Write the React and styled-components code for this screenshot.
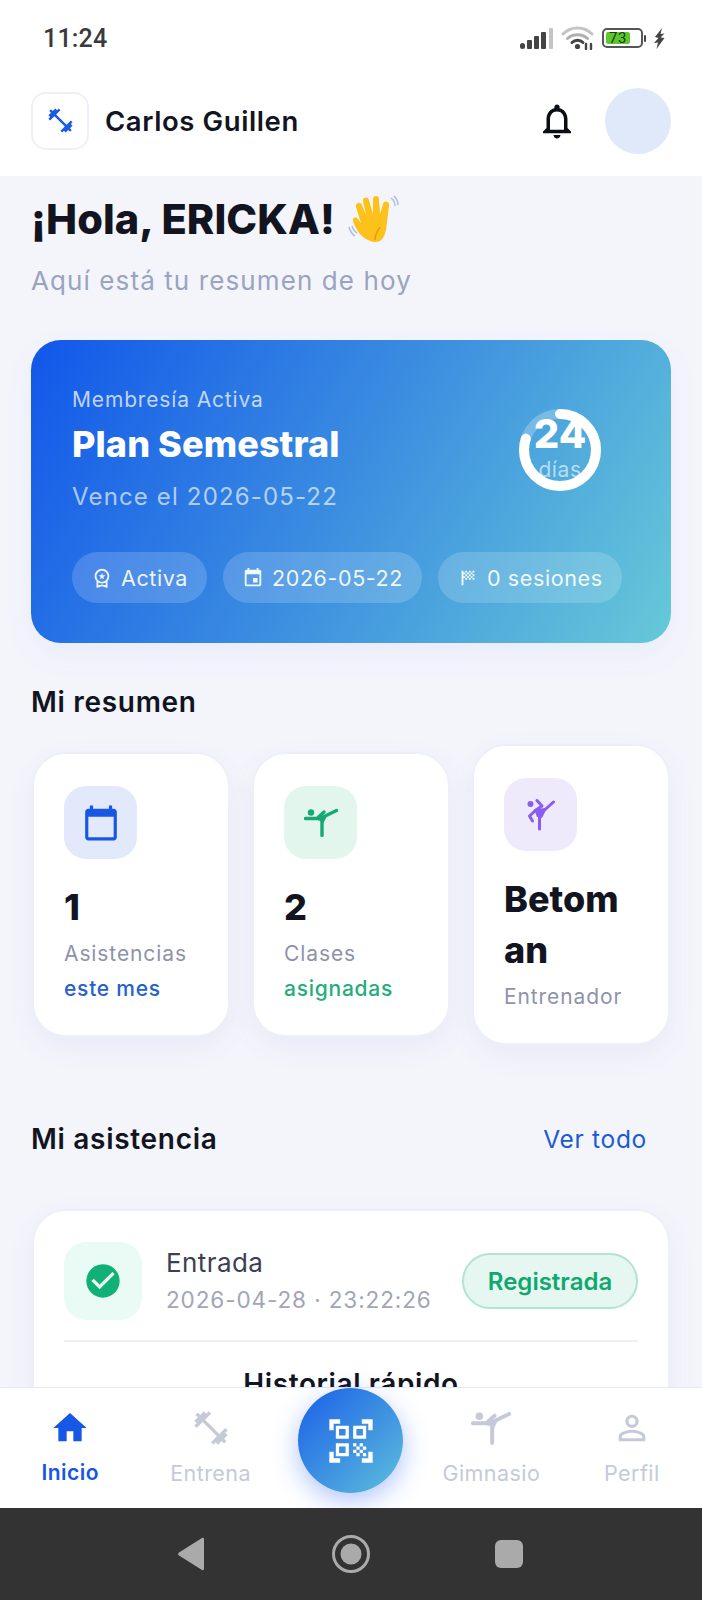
import React from 'react';
import styled, { createGlobalStyle } from 'styled-components';
import {
  MdCalendarToday,
  MdCheckCircle,
  MdEvent,
  MdFitnessCenter,
  MdHome,
  MdNotificationsNone,
  MdOutlineWorkspacePremium,
  MdPersonOutline,
  MdQrCodeScanner,
  MdSportsScore,
} from 'react-icons/md';

const bodyFont = '"Inter", "Liberation Sans", sans-serif';

const GlobalStyle = createGlobalStyle`
  html, body {
    margin: 0;
    padding: 0;
    background: #f4f5fb;
  }
  * {
    box-sizing: border-box;
  }
`;

const Screen = styled.div`
  display: flex;
  flex-direction: column;
  width: 702px;
  height: 1600px;
  overflow: hidden;
  font-family: ${bodyFont};
  background: #f4f5fb;
`;

const StatusBar = styled.div`
  display: flex;
  align-items: center;
  justify-content: space-between;
  flex: none;
  height: 76px;
  padding: 0 37px 0 43px;
  background: #fff;
`;
const Time = styled.span`
  font-family: Roboto, sans-serif;
  font-size: 25px;
  font-weight: 500;
  letter-spacing: 0.2px;
  color: #3a3a3a;
`;
const StatusIcons = styled.div`
  display: flex;
  align-items: center;
  gap: 8px;
`;
const BatteryWrap = styled.div`
  display: flex;
  align-items: center;
  gap: 1px;
`;
const BatteryNub = styled.div`
  width: 2px;
  height: 7px;
  border-radius: 1px;
  background: #444;
`;
const Battery = styled.div`
  width: 41px;
  height: 20px;
  padding: 2px;
  border: 2px solid #555;
  border-radius: 5px;
`;
const BatteryLevel = styled.div`
  height: 100%;
  border-radius: 2px;
  background: #5cc82e;
  font-family: Roboto, sans-serif;
  font-size: 15px;
  line-height: 12px;
  letter-spacing: 0.5px;
  text-align: center;
  color: #1f3a10;
`;

const Header = styled.header`
  display: flex;
  align-items: center;
  flex: none;
  height: 100px;
  padding: 12px 31px 23px 31px;
  background: #fff;
`;
const LogoBox = styled.div`
  display: grid;
  place-items: center;
  width: 58px;
  height: 58px;
  border: 2px solid #eef0f8;
  border-radius: 15px;
  color: #1a5ce0;
  font-size: 29px;
`;
const UserName = styled.div`
  flex: 1;
  margin-left: 16px;
  font-size: 27.5px;
  font-weight: 600;
  letter-spacing: 0.6px;
  color: #12141f;
`;
const Bell = styled.div`
  display: flex;
  margin-right: 27px;
  font-size: 42px;
  color: #0c0e16;
`;
const Avatar = styled.div`
  width: 66px;
  height: 66px;
  border-radius: 50%;
  background: #e0e9fa;
`;

const Main = styled.main`
  flex: 1;
  min-height: 0;
  overflow: hidden;
  padding: 18px 31px 0;
`;
const Greeting = styled.h1`
  display: flex;
  align-items: center;
  gap: 12px;
  margin: 0;
  font-size: 41.5px;
  line-height: 50px;
  font-weight: 800;
  letter-spacing: 0.1px;
  color: #12141f;
`;
const Subtitle = styled.p`
  margin: 21px 0 0;
  font-size: 26px;
  line-height: 32px;
  letter-spacing: 1.1px;
  color: #9aa3bf;
`;

const Hero = styled.section`
  margin-top: 43px;
  padding: 46px 41px 40px 41px;
  border-radius: 30px;
  background: linear-gradient(120deg, #1157ea 0%, #3c8ee0 50%, #66c9d8 100%);
  box-shadow: 0 12px 32px rgba(60, 100, 220, 0.06);
`;
const HeroTop = styled.div`
  display: flex;
  align-items: center;
  justify-content: space-between;
`;
const HeroLabel = styled.div`
  font-size: 21px;
  line-height: 28px;
  letter-spacing: 0.85px;
  color: rgba(255, 255, 255, 0.72);
`;
const HeroTitle = styled.div`
  margin-top: 8px;
  font-size: 36px;
  line-height: 44px;
  font-weight: 800;
  letter-spacing: 0.1px;
  color: #fff;
`;
const HeroDate = styled.div`
  margin-top: 15px;
  font-size: 24px;
  line-height: 32px;
  letter-spacing: 1.15px;
  color: rgba(255, 255, 255, 0.65);
`;
const Ring = styled.div`
  position: relative;
  width: 82px;
  height: 82px;
  margin-right: 29px;
`;
const RingText = styled.div`
  position: absolute;
  inset: -12px -10px -14px;
  display: flex;
  flex-direction: column;
  align-items: center;
  justify-content: center;
`;
const RingValue = styled.span`
  font-size: 40px;
  line-height: 38px;
  font-weight: 800;
  color: #fff;
`;
const RingUnit = styled.span`
  font-size: 21px;
  line-height: 34px;
  letter-spacing: 0.6px;
  color: rgba(255, 255, 255, 0.6);
`;
const Chips = styled.div`
  display: flex;
  gap: 16px;
  margin-top: 39px;
`;
const Chip = styled.div`
  display: flex;
  align-items: center;
  gap: 8px;
  height: 51px;
  padding: 0 19px;
  border-radius: 26px;
  background: rgba(255, 255, 255, 0.17);
  font-size: 21.5px;
  letter-spacing: 0.6px;
  white-space: nowrap;
  color: rgba(255, 255, 255, 0.92);
  & > svg {
    font-size: 22px;
    flex: none;
  }
`;

const SectionRow = styled.div`
  display: flex;
  align-items: center;
  justify-content: space-between;
  margin-top: ${({ $top }) => $top}px;
  padding-right: 24px;
`;
const SectionTitle = styled.h2`
  margin: 0;
  font-size: 28px;
  line-height: 36px;
  font-weight: 600;
  letter-spacing: 0.7px;
  color: #12141f;
`;
const SeeAll = styled.span`
  font-size: 24.5px;
  letter-spacing: 0.7px;
  color: #1a5cd0;
`;

const Stats = styled.div`
  display: flex;
  align-items: center;
  gap: 22px;
  margin-top: 24px;
  padding: 0 1px;
`;
const StatCard = styled.div`
  flex: 1 1 0;
  min-width: 0;
  padding: 32px 30px 30px;
  border: 2px solid #edf0f9;
  border-radius: 34px;
  background: #fff;
  box-shadow: 0 10px 28px rgba(70, 90, 180, 0.07);
`;
const IconTile = styled.div`
  display: grid;
  place-items: center;
  width: ${({ $size }) => $size}px;
  height: ${({ $size }) => $size}px;
  flex: none;
  border-radius: 22px;
  background: ${({ $bg }) => $bg};
  color: ${({ $fg }) => $fg};
`;
const StatValue = styled.div`
  margin-top: 23px;
  font-size: 36px;
  line-height: 51px;
  font-weight: 800;
  word-break: break-all;
  color: #12141f;
`;
const StatLabel = styled.div`
  margin-top: 5px;
  font-size: 21px;
  line-height: 32px;
  letter-spacing: 0.9px;
  color: #8e93ab;
`;
const StatNote = styled.div`
  margin-top: 3px;
  font-size: 21px;
  line-height: 32px;
  font-weight: 500;
  letter-spacing: 0.75px;
  color: ${({ $color }) => $color};
`;

const AttendanceCard = styled.div`
  margin: 52px 1px 0;
  padding: 31px 30px 60px;
  border: 2px solid #edf0f9;
  border-radius: 34px;
  background: #fff;
  box-shadow: 0 10px 28px rgba(70, 90, 180, 0.07);
`;
const AttendanceRow = styled.div`
  display: flex;
  align-items: center;
  padding-bottom: 20px;
  border-bottom: 2px solid #eef0f7;
`;
const AttendanceText = styled.div`
  flex: 1;
  margin-left: 24px;
`;
const AttendanceTitle = styled.div`
  font-size: 26px;
  line-height: 36px;
  letter-spacing: 0.4px;
  color: #3a3f55;
`;
const AttendanceDate = styled.div`
  margin-top: 2px;
  font-size: 22.5px;
  line-height: 34px;
  letter-spacing: 0.9px;
  color: #a1a5b8;
`;
const Badge = styled.div`
  display: grid;
  place-items: center;
  width: 176px;
  height: 56px;
  border: 2px solid #b0e5cf;
  border-radius: 28px;
  background: #e5f7f0;
  font-size: 24px;
  font-weight: 600;
  color: #10a86f;
`;
const QuickTitle = styled.div`
  margin-top: 24px;
  font-size: 28px;
  line-height: 36px;
  font-weight: 600;
  letter-spacing: 0.6px;
  text-align: center;
  color: #12141f;
`;

const BottomNav = styled.nav`
  position: relative;
  display: grid;
  grid-template-columns: repeat(5, 1fr);
  flex: none;
  height: 121px;
  border-top: 1px solid #e6e9f5;
  background: #fff;
`;
const NavItem = styled.div`
  display: flex;
  flex-direction: column;
  align-items: center;
  padding-top: 19px;
  color: ${({ $active }) => ($active ? '#1757e5' : '#c5cad9')};
  font-size: ${({ $active }) => ($active ? 21 : 21.5)}px;
  line-height: 32px;
  letter-spacing: 0.45px;
  font-weight: ${({ $active }) => ($active ? 600 : 400)};
`;
const NavIcon = styled.div`
  display: grid;
  place-items: center;
  width: 44px;
  height: 42px;
  margin-bottom: 8px;
  font-size: 40px;
`;
const Fab = styled.div`
  display: grid;
  place-items: center;
  justify-self: center;
  width: 105px;
  height: 105px;
  border-radius: 50%;
  background: linear-gradient(135deg, #1a5fe8, #5dbfdc);
  box-shadow: 0 8px 26px rgba(30, 90, 240, 0.35);
  color: #fff;
  font-size: 52px;
`;

const SystemBar = styled.div`
  position: relative;
  display: flex;
  align-items: center;
  justify-content: center;
  gap: 124px;
  flex: none;
  height: 92px;
  background: #333;
`;

const Signal = () => (
  <svg width="33" height="21" viewBox="0 0 33 21" fill="#444">
    <rect x="0" y="15" width="5" height="6" rx="2.5" />
    <rect x="7" y="12" width="5" height="9" rx="1" />
    <rect x="14" y="8" width="5" height="13" rx="1" />
    <rect x="21" y="4" width="5" height="17" rx="1" />
    <rect x="29" y="0" width="4" height="21" rx="1" fill="#c4c4c4" />
  </svg>
);

const Wifi = () => (
  <svg width="33" height="24" viewBox="0 0 33 24" fill="none" strokeLinecap="round">
    <path d="M2 8 C10 0 23 0 31 8" stroke="#c4c4c4" strokeWidth="3" />
    <path d="M6.5 12.5 C12 7.5 21 7.5 26.5 12.5" stroke="#b0b0b0" strokeWidth="3" />
    <path d="M11 16.5 C14 13.5 19 13.5 22 16.5" stroke="#444" strokeWidth="3" />
    <circle cx="16.5" cy="20.5" r="2.6" fill="#444" />
    <path d="M25 23v-5M30 23v-5" stroke="#444" strokeWidth="2.4" />
  </svg>
);

const Bolt = () => (
  <svg width="11" height="21" viewBox="0 0 11 21" fill="#444">
    <path d="M8 0 L1 9 L4.5 10 L0 15 L4 14.5 L2.5 21 L10.5 10 L6.5 9.5 L10.5 5.5 L6.5 6 Z" />
  </svg>
);

const WavingHand = () => (
  <svg width="52" height="50" viewBox="0 0 52 50">
    <path
      d="M21 46 C12 42 8 33 6 27 C5 24 9 22 11 25 L14 29 L9 13 C8 9 13 7 15 11 L19 21 L16 7 C15 3 21 2 22 6 L26 20 L26 5 C26 1 32 1 32 5 L33 20 L36 10 C37 6 43 7 42 12 L40 28 C39 38 38 43 33 47 C29 49 25 48 21 46 Z"
      fill="#fcc21b"
    />
    <path d="M33 33 C30 37 28 41 28 46" stroke="#e59e0b" strokeWidth="1.5" fill="none" />
    <path d="M44 4 C47 6 48 9 48 12 M47 2 C50 5 51 8 51 11" stroke="#a9bedb" strokeWidth="1.5" fill="none" />
    <path d="M2 33 C3 37 5 40 8 42 M5 32 C6 35 8 38 10 39" stroke="#a9bedb" strokeWidth="1.5" fill="none" />
  </svg>
);

const KickFigure = ({ width = 34, height = 30 }) => (
  <svg width={width} height={height} viewBox="0 0 34 30" fill="none" stroke="currentColor" strokeWidth="3.4" strokeLinecap="round" strokeLinejoin="round">
    <circle cx="7" cy="4.5" r="3.2" fill="currentColor" stroke="none" />
    <path d="M1.5 10.5 H13 L20 4" />
    <path d="M15 11 L32.5 2.5" />
    <path d="M18 12 V27.5" />
    <path d="M13 9 L23 8 L19 16 Z" fill="currentColor" stroke="none" />
  </svg>
);

const HighKickFigure = () => (
  <svg width="28" height="32" viewBox="0 0 28 32" fill="none" stroke="currentColor" strokeWidth="3" strokeLinecap="round" strokeLinejoin="round">
    <circle cx="3.5" cy="5" r="3" fill="currentColor" stroke="none" />
    <path d="M10 1.5 L15 7 L9 11" />
    <path d="M8 12 L2.5 17 L5.5 22" />
    <path d="M8 11.5 H17 L26.5 3" />
    <path d="M12.5 13 V30" />
    <path d="M7 10 L20 9 L15 19 L10 18 Z" fill="currentColor" stroke="none" />
  </svg>
);

const DaysRing = ({ percent }) => {
  const radius = 36;
  const length = 2 * Math.PI * radius;
  return (
    <Ring>
      <svg width="82" height="82" viewBox="0 0 82 82">
        <circle cx="41" cy="41" r={radius} fill="none" stroke="rgba(255,255,255,0.25)" strokeWidth="10" />
        <circle
          cx="41"
          cy="41"
          r={radius}
          fill="none"
          stroke="#fff"
          strokeWidth="10"
          strokeLinecap="round"
          strokeDasharray={`${length * percent} ${length}`}
          transform="rotate(-90 41 41)"
        />
      </svg>
      <RingText>
        <RingValue>24</RingValue>
        <RingUnit>días</RingUnit>
      </RingText>
    </Ring>
  );
};

const stats = [
  {
    key: 'attendance',
    value: '1',
    label: 'Asistencias',
    note: 'este mes',
    noteColor: '#2560cc',
    icon: <MdCalendarToday size={38} />,
    bg: '#e1e9fa',
    fg: '#1757e5',
  },
  {
    key: 'classes',
    value: '2',
    label: 'Clases',
    note: 'asignadas',
    noteColor: '#24ad7a',
    icon: <KickFigure />,
    bg: '#e2f6ee',
    fg: '#16a974',
  },
  {
    key: 'trainer',
    value: 'Betoman',
    label: 'Entrenador',
    icon: <HighKickFigure />,
    bg: '#efe9fc',
    fg: '#8a5cf0',
  },
];

const navItems = [
  { key: 'home', label: 'Inicio', icon: <MdHome />, active: true },
  { key: 'train', label: 'Entrena', icon: <MdFitnessCenter /> },
  { key: 'fab' },
  { key: 'gym', label: 'Gimnasio', icon: <KickFigure width={40} height={35} /> },
  { key: 'profile', label: 'Perfil', icon: <MdPersonOutline /> },
];

const App = () => (
  <Screen>
    <GlobalStyle />
    <StatusBar>
      <Time>11:24</Time>
      <StatusIcons>
        <Signal />
        <Wifi />
        <BatteryWrap>
          <Battery>
            <BatteryLevel style={{ width: '73%' }}>73</BatteryLevel>
          </Battery>
          <BatteryNub />
        </BatteryWrap>
        <Bolt />
      </StatusIcons>
    </StatusBar>
    <Header>
      <LogoBox>
        <MdFitnessCenter />
      </LogoBox>
      <UserName>Carlos Guillen</UserName>
      <Bell>
        <MdNotificationsNone />
      </Bell>
      <Avatar />
    </Header>
    <Main>
      <Greeting>
        ¡Hola, ERICKA!
        <WavingHand />
      </Greeting>
      <Subtitle>Aquí está tu resumen de hoy</Subtitle>
      <Hero>
        <HeroTop>
          <div>
            <HeroLabel>Membresía Activa</HeroLabel>
            <HeroTitle>Plan Semestral</HeroTitle>
            <HeroDate>Vence el 2026-05-22</HeroDate>
          </div>
          <DaysRing percent={0.8} />
        </HeroTop>
        <Chips>
          <Chip>
            <MdOutlineWorkspacePremium />
            Activa
          </Chip>
          <Chip>
            <MdEvent />
            2026-05-22
          </Chip>
          <Chip>
            <MdSportsScore />
            0 sesiones
          </Chip>
        </Chips>
      </Hero>
      <SectionRow $top={41}>
        <SectionTitle>Mi resumen</SectionTitle>
      </SectionRow>
      <Stats>
        {stats.map((stat) => (
          <StatCard key={stat.key}>
            <IconTile $size={73} $bg={stat.bg} $fg={stat.fg}>
              {stat.icon}
            </IconTile>
            <StatValue>{stat.value}</StatValue>
            <StatLabel>{stat.label}</StatLabel>
            {stat.note && <StatNote $color={stat.noteColor}>{stat.note}</StatNote>}
          </StatCard>
        ))}
      </Stats>
      <SectionRow $top={76}>
        <SectionTitle>Mi asistencia</SectionTitle>
        <SeeAll>Ver todo</SeeAll>
      </SectionRow>
      <AttendanceCard>
        <AttendanceRow>
          <IconTile $size={78} $bg="#e9fbf4" $fg="#10b077">
            <MdCheckCircle size={40} />
          </IconTile>
          <AttendanceText>
            <AttendanceTitle>Entrada</AttendanceTitle>
            <AttendanceDate>2026-04-28 · 23:22:26</AttendanceDate>
          </AttendanceText>
          <Badge>Registrada</Badge>
        </AttendanceRow>
        <QuickTitle>Historial rápido</QuickTitle>
      </AttendanceCard>
    </Main>
    <BottomNav>
      {navItems.map((item) => (item.key === 'fab' ? (
        <Fab key={item.key}>
          <MdQrCodeScanner />
        </Fab>
      ) : (
        <NavItem key={item.key} $active={item.active}>
          <NavIcon>{item.icon}</NavIcon>
          {item.label}
        </NavItem>
      )))}
    </BottomNav>
    <SystemBar>
      <svg width="30" height="34" viewBox="0 0 30 34" fill="#aaa">
        <path d="M25 1 C26 0.5 27 1 27 2.5 V31.5 C27 33 26 33.5 25 33 L2 18.5 C0.8 17.6 0.8 16.4 2 15.5 Z" />
      </svg>
      <svg width="40" height="40" viewBox="0 0 40 40" fill="#aaa">
        <circle cx="20" cy="20" r="17.5" fill="none" stroke="#aaa" strokeWidth="3" />
        <circle cx="20" cy="20" r="10.5" />
      </svg>
      <svg width="30" height="28" viewBox="0 0 30 28" fill="#aaa">
        <rect x="0" y="0" width="28" height="28" rx="6" />
      </svg>
    </SystemBar>
  </Screen>
);

export default App;
